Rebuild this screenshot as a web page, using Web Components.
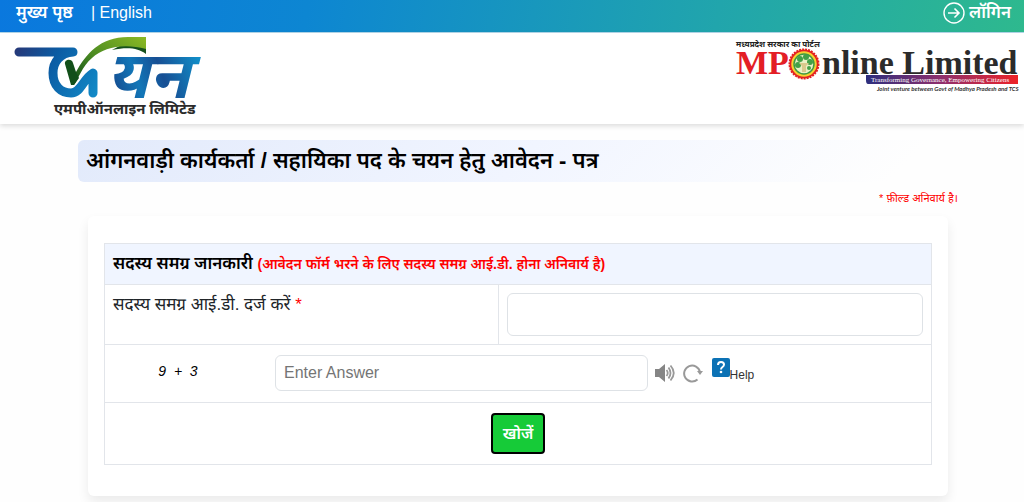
<!DOCTYPE html>
<html lang="hi">
<head>
  <meta charset="UTF-8">
  <meta name="viewport" content="width=device-width, initial-scale=1.0">
  <title>एमपीऑनलाइन लिमिटेड</title>
  <style>
    body {
      margin: 0;
      background: #fefefe;
      color: #212529;
      font-family: "Liberation Sans", "Noto Sans Devanagari", "Noto Sans", sans-serif;
      font-size: 16px;
    }

    main {
      padding: 16px 64px 24px 78px;
    }
  </style>
</head>
<body>
  <top-bar></top-bar>
  <site-header></site-header>
  <main>
    <page-title>आंगनवाड़ी कार्यकर्ता / सहायिका पद के चयन हेतु आवेदन - पत्र</page-title>
    <form-card>
      <span slot="note">* फ़ील्ड अनिवार्य है।</span>
      <samagra-form></samagra-form>
    </form-card>
  </main>

  <script>
    class TopBar extends HTMLElement {
      constructor() {
        super();
        this.attachShadow({ mode: 'open' });
      }

      connectedCallback() {
        this.shadowRoot.innerHTML = `
          <style>
            :host {
              display: block;
              background: linear-gradient(100deg, #0a78de, #0d86d2 30%, #21a5ac 70%, #2eb98e);
              border-bottom: 1px solid #b4d8ea;
            }

            nav {
              display: flex;
              align-items: center;
              justify-content: space-between;
              height: 32px;
              padding: 0 13px 6px 16px;
              box-sizing: border-box;
            }

            .links {
              display: flex;
              align-items: center;
              gap: 18px;
            }

            a {
              color: #fff;
              text-decoration: none;
            }

            .hindi {
              font-size: 17px;
              font-weight: 600;
              line-height: 24px;
            }

            .login {
              display: flex;
              align-items: center;
              gap: 4px;
            }
          </style>

          <nav>
            <div class="links">
              <a class="hindi" href="#home">मुख्य पृष्ठ</a>
              <a href="#english">| English</a>
            </div>
            <a class="hindi login" href="#login">
              <svg width="22" height="22" viewBox="0 0 22 22" fill="none" stroke="#fff" aria-hidden="true">
                <circle cx="11" cy="11" r="10" stroke-width="1.4"/>
                <path d="M5 11H16M11.5 6.5L16 11L11.5 15.5" stroke-width="1.6"/>
              </svg>
              लॉगिन
            </a>
          </nav>
        `;
      }
    }

    class SiteHeader extends HTMLElement {
      constructor() {
        super();
        this.attachShadow({ mode: 'open' });
      }

      connectedCallback() {
        this.shadowRoot.innerHTML = `
          <style>
            :host {
              display: block;
              background: #fff;
              box-shadow: 0 2px 5px rgba(0, 0, 0, 0.14);
            }

            header {
              display: flex;
              justify-content: space-between;
              align-items: flex-start;
              padding: 1px 4px 6px 12px;
            }

            svg {
              display: block;
              overflow: visible;
            }

            .mponline {
              margin-top: 2px;
            }

            .deva {
              font-family: "Noto Sans Devanagari", "Noto Sans", sans-serif;
              font-weight: 700;
            }

            .serif {
              font-family: "Liberation Serif", serif;
              font-weight: 700;
            }
          </style>

          <header>
            <svg width="196" height="84" viewBox="12 34 196 84" role="img" aria-label="चयन एमपीऑनलाइन लिमिटेड">
              <defs>
                <linearGradient id="blue" gradientUnits="userSpaceOnUse" x1="15" y1="50" x2="98" y2="95">
                  <stop offset="0" stop-color="#263878"/>
                  <stop offset=".4" stop-color="#0b5ba3"/>
                  <stop offset="1" stop-color="#128bc8"/>
                </linearGradient>
                <linearGradient id="word" gradientUnits="userSpaceOnUse" x1="105" y1="95" x2="200" y2="60">
                  <stop offset="0" stop-color="#173b80"/>
                  <stop offset=".35" stop-color="#1277b8"/>
                  <stop offset=".6" stop-color="#174f94"/>
                  <stop offset="1" stop-color="#118fc9"/>
                </linearGradient>
                <linearGradient id="green" x1="0" y1="1" x2="1" y2="0">
                  <stop offset="0" stop-color="#0b4a18"/>
                  <stop offset=".45" stop-color="#4c8b22"/>
                  <stop offset="1" stop-color="#8cba25"/>
                </linearGradient>
              </defs>
              <g fill="none" stroke="url(#blue)" stroke-linecap="round" stroke-linejoin="round" stroke-width="9">
                <path d="M19 52H73C60 53 53 62 53 73C53 86 61 93 71 93C81 93 83 79 93 73V93"/>
              </g>
              <text class="deva" x="107" y="98" font-size="66" font-style="italic" fill="url(#word)">यन</text>
              <path d="M146 54C138 48 128 47 112 50L125 43L146 45Z" fill="#16511d"/>
              <path d="M74 85C78 80 82 66 92 58C104 47 124 43 146 49V37H128C100 37 86 54 76 72Z" fill="url(#green)"/>
              <path d="M65 64C64 59 72 58 73 63L76 72L79 78L74 85H71Z" fill="#124f19"/>
              <text class="deva" x="54" y="114" font-size="15" fill="#2b2b2b">एमपीऑनलाइन लिमिटेड</text>
            </svg>

            <svg class="mponline" width="286" height="62" viewBox="734 36 286 62" role="img" aria-label="MPOnline Limited">
              <defs>
                <linearGradient id="ribbon">
                  <stop offset="0" stop-color="#2d2f7e"/>
                  <stop offset=".5" stop-color="#8f2f6c"/>
                  <stop offset="1" stop-color="#ed2228"/>
                </linearGradient>
              </defs>
              <text class="deva" x="736" y="47" font-size="8" fill="#222">मध्यप्रदेश सरकार का पोर्टल</text>
              <text class="serif" x="736" y="74" font-size="34" fill="#e31e25">MP</text>
              <text class="serif" x="822" y="74" font-size="34" fill="#2b2b2b">nline Limited</text>
              <circle cx="804" cy="64" r="14.5" fill="#f4c52b" stroke="#e31e25" stroke-width="2" stroke-dasharray="2 1"/>
              <circle cx="804" cy="64" r="13.5" fill="#f6d02f" stroke="#e31e25" stroke-width="1.5"/>
              <circle cx="804" cy="64" r="10" fill="#eaf0c5" stroke="#3d9a42" stroke-width="1.5"/>
              <g fill="#43a047">
                <circle cx="800" cy="59" r="3"/>
                <circle cx="806" cy="57" r="3"/>
                <circle cx="810" cy="62" r="3"/>
                <circle cx="798" cy="65" r="3"/>
                <circle cx="809" cy="68" r="2"/>
              </g>
              <path d="M802 72V66L799 63H809L806 66V72Z" fill="#d9c98d"/>
              <path d="M866 75H1018V84H868Q866 84 866 80Z" fill="url(#ribbon)"/>
              <text x="871" y="82" font-size="7" font-family="Liberation Serif, serif" fill="#fff">Transforming Governance, Empowering Citizens</text>
              <text x="877" y="91" font-size="6" font-family="Lato, sans-serif" font-style="italic" font-weight="700" fill="#333">Joint venture between Govt of Madhya Pradesh and TCS</text>
            </svg>
          </header>
        `;
      }
    }

    class PageTitle extends HTMLElement {
      constructor() {
        super();
        this.attachShadow({ mode: 'open' });
      }

      connectedCallback() {
        this.shadowRoot.innerHTML = `
          <style>
            :host {
              display: block;
            }

            h1 {
              margin: 0;
              padding: 0 8px;
              border-radius: 6px;
              background: linear-gradient(135deg, #e2eafb, #f1f5ff 50%, #fefefe 92%);
              color: #000;
              font-size: 22px;
              font-weight: 600;
              line-height: 42px;
            }
          </style>

          <h1><slot></slot></h1>
        `;
      }
    }

    class FormCard extends HTMLElement {
      constructor() {
        super();
        this.attachShadow({ mode: 'open' });
      }

      connectedCallback() {
        this.shadowRoot.innerHTML = `
          <style>
            :host {
              display: block;
            }

            .note {
              margin: 0 2px 8px;
              padding-top: 6px;
              color: #f00;
              font-size: 11px;
              line-height: 20px;
              text-align: right;
            }

            section {
              margin: 0 12px 0 10px;
              padding: 27px 16px 31px;
              border-radius: 6px;
              background: #fff;
              box-shadow: 0 6px 12px rgba(0, 0, 0, 0.08);
            }
          </style>

          <p class="note"><slot name="note"></slot></p>
          <section><slot></slot></section>
        `;
      }
    }

    class SamagraForm extends HTMLElement {
      constructor() {
        super();
        this.attachShadow({ mode: 'open' });
      }

      connectedCallback() {
        this.shadowRoot.innerHTML = `
          <style>
            :host {
              display: block;
            }

            table {
              width: 100%;
              border-collapse: collapse;
              table-layout: fixed;
            }

            th,
            td {
              padding: 8px;
              border: 1px solid #e2e5ea;
              text-align: left;
              vertical-align: top;
              line-height: 24px;
            }

            th {
              background: #f0f5ff;
              color: #000;
              font-size: 17px;
              font-weight: 600;
            }

            th small {
              color: #f00;
              font-size: 14px;
              line-height: 16px;
            }

            .field {
              width: 47.6%;
            }

            label {
              font-size: 17px;
            }

            .required {
              color: #f00;
            }

            input {
              display: block;
              width: 100%;
              height: 36px;
              padding: 0 8px;
              box-sizing: border-box;
              border: 1px solid #dee2e6;
              border-radius: 6px;
              background: #fff;
              font: 16px "Liberation Sans", sans-serif;
            }

            input::placeholder {
              color: #757575;
            }

            #samagra {
              height: 43px;
            }

            .captcha {
              display: grid;
              grid-template-columns: 20% 46% 1fr;
              align-items: center;
              padding: 2px 0 3px;
            }

            .sum {
              padding: 0 32px 4px 0;
              color: #000;
              font-size: 14px;
              font-style: italic;
              line-height: 20px;
              text-align: center;
              white-space: pre;
            }

            .tools {
              display: flex;
              align-items: center;
              padding-left: 6px;
            }

            .icon {
              display: flex;
              margin-right: 7px;
              padding: 0;
              border: 0;
              background: none;
              cursor: pointer;
            }

            .help {
              display: flex;
              align-items: flex-end;
              margin-left: 2px;
              padding-bottom: 8px;
              color: #333;
              font-size: 12px;
              line-height: 12px;
              text-decoration: none;
            }

            .help svg {
              margin-bottom: 4px;
            }

            .actions {
              padding: 10px 8px;
              text-align: center;
            }

            .search {
              display: block;
              height: 41px;
              margin: 0 auto;
              padding: 0 10px;
              border: 2px solid #000;
              border-radius: 4px;
              background: #16cb38;
              color: #fff;
              font: inherit;
              font-size: 16px;
              font-weight: 600;
              cursor: pointer;
            }
          </style>

          <form>
            <table>
              <colgroup>
                <col class="field">
                <col>
              </colgroup>
              <tr>
                <th colspan="2">सदस्य समग्र जानकारी <small>(आवेदन फॉर्म भरने के लिए सदस्य समग्र आई.डी. होना अनिवार्य है)</small></th>
              </tr>
              <tr>
                <td><label for="samagra">सदस्य समग्र आई.डी. दर्ज करें <span class="required">*</span></label></td>
                <td><input id="samagra" type="text"></td>
              </tr>
              <tr>
                <td colspan="2">
                  <div class="captcha">
                    <label class="sum" for="answer">9&nbsp; +&nbsp; 3</label>
                    <input id="answer" type="text" placeholder="Enter Answer">
                    <div class="tools">
                      <button class="icon" type="button" aria-label="Play audio">
                        <svg width="22" height="20" viewBox="0 0 22 20">
                          <path d="M1 6H5L11 1V19L5 14H1Z" fill="#858585"/>
                          <path d="M12.5 7Q15 10 12.5 13M14.5 4.5Q18.5 10 14.5 15.5M16.5 2.5Q23 10 16.5 17.5" fill="none" stroke="#999" stroke-width="1.8"/>
                        </svg>
                      </button>
                      <button class="icon" type="button" aria-label="Refresh">
                        <svg width="20" height="20" viewBox="0 0 20 20">
                          <path d="M14.5 16.5A8 8 0 1 1 17 9" fill="none" stroke="#999" stroke-width="2"/>
                          <path d="M14 8H20L17 12Z" fill="#999"/>
                        </svg>
                      </button>
                      <a class="help" href="#help">
                        <svg width="18" height="19" viewBox="0 0 18 19" aria-hidden="true">
                          <rect width="18" height="19" rx="2" fill="#0c72b5"/>
                          <path d="M6 7Q6 4 9 4Q12 4 12 6.5Q12 8 10.5 9Q9 10 9 11.5" fill="none" stroke="#fff" stroke-width="2"/>
                          <circle cx="9" cy="14" r="1.3" fill="#fff"/>
                        </svg>
                        Help
                      </a>
                    </div>
                  </div>
                </td>
              </tr>
              <tr>
                <td class="actions" colspan="2"><button class="search" type="submit">खोजें</button></td>
              </tr>
            </table>
          </form>
        `;
      }
    }

    customElements.define('top-bar', TopBar);
    customElements.define('site-header', SiteHeader);
    customElements.define('page-title', PageTitle);
    customElements.define('form-card', FormCard);
    customElements.define('samagra-form', SamagraForm);
  </script>
</body>
</html>
